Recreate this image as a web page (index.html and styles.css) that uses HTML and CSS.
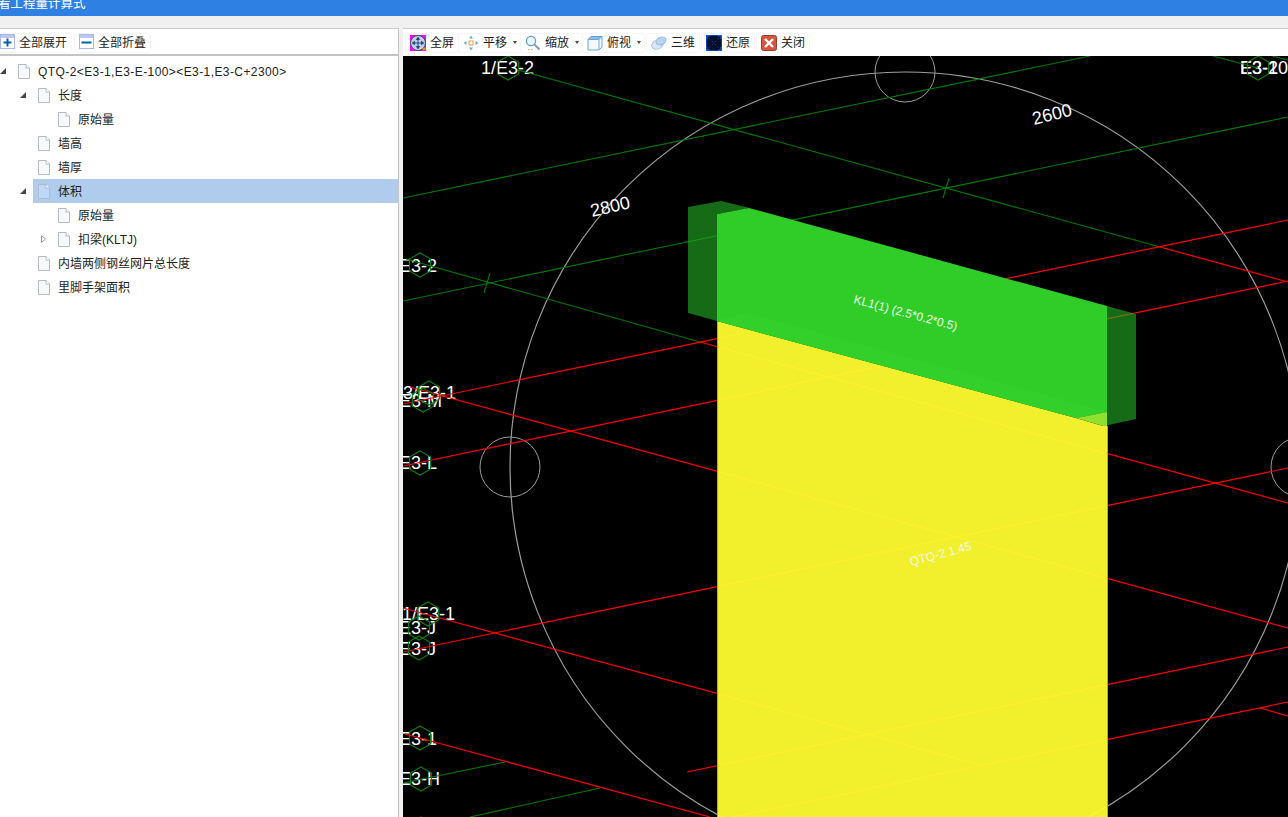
FILE: index.html
```html
<!DOCTYPE html>
<html lang="zh">
<head>
<meta charset="utf-8">
<title>查看工程量计算式</title>
<link rel="stylesheet" href="styles.css">
</head>
<body>
<svg class="defs">
  <symbol id="doc" viewBox="0 0 12 15">
    <path d="M.5.5H8L11.5 4V14.5H.5Z" stroke="#b4b9c6"/>
    <path d="M8 .5V4H11.5" fill="#fff" stroke="#b4b9c6"/>
  </symbol>
  <polygon id="hex" points="0,-12 10.6,-6 10.6,6 0,12 -10.6,6 -10.6,-6" fill="none" stroke="#0c800c" stroke-width="1.1"/>
</svg>

<header class="title"><span class="title-text">看工程量计算式</span></header>

<main class="main">
  <section class="tree-panel">
    <div class="toolbar toolbar-left">
      <div class="btn">
        <svg class="ico-s" viewBox="0 0 15 15"><rect x=".5" y=".5" width="14" height="14" fill="#fff" stroke="#a9b8ea"/><rect x="1" y="1" width="13" height="3" fill="#bcc8f2"/><path d="M7.5 4.5v8M3.5 8.5h8" stroke="#0b5ea8" stroke-width="2"/></svg>
        <span class="txt">全部展开</span>
      </div>
      <div class="btn">
        <svg class="ico-s" viewBox="0 0 15 15"><rect x=".5" y=".5" width="14" height="14" fill="#fff" stroke="#a9b8ea"/><rect x="1" y="1" width="13" height="3" fill="#bcc8f2"/><path d="M2.5 8.5h10" stroke="#0b5ea8" stroke-width="2"/></svg>
        <span class="txt">全部折叠</span>
      </div>
    </div>
    <ul class="tree">
      <li class="row"><svg class="arrow" viewBox="0 0 6 6"><path d="M6 0V6H0Z"/></svg><div class="node"><svg class="doc"><use href="#doc"/></svg><span class="txt spaced">QTQ-2&lt;E3-1,E3-E-100&gt;&lt;E3-1,E3-C+2300&gt;</span></div></li>
      <li class="row l1"><svg class="arrow" viewBox="0 0 6 6"><path d="M6 0V6H0Z"/></svg><div class="node"><svg class="doc"><use href="#doc"/></svg><span class="txt">长度</span></div></li>
      <li class="row l2"><span class="arrow"></span><div class="node"><svg class="doc"><use href="#doc"/></svg><span class="txt">原始量</span></div></li>
      <li class="row l1"><span class="arrow"></span><div class="node"><svg class="doc"><use href="#doc"/></svg><span class="txt">墙高</span></div></li>
      <li class="row l1"><span class="arrow"></span><div class="node"><svg class="doc"><use href="#doc"/></svg><span class="txt">墙厚</span></div></li>
      <li class="row l1"><svg class="arrow" viewBox="0 0 6 6"><path d="M6 0V6H0Z"/></svg><div class="node sel"><svg class="doc"><use href="#doc"/></svg><span class="txt">体积</span></div></li>
      <li class="row l2"><span class="arrow"></span><div class="node"><svg class="doc"><use href="#doc"/></svg><span class="txt">原始量</span></div></li>
      <li class="row l2"><svg class="arrow closed" viewBox="0 0 13 8"><path d="M1.5 .7 5.5 4 1.5 7.3Z"/></svg><div class="node"><svg class="doc"><use href="#doc"/></svg><span class="txt">扣梁(KLTJ)</span></div></li>
      <li class="row l1"><span class="arrow"></span><div class="node"><svg class="doc"><use href="#doc"/></svg><span class="txt">内墙两侧钢丝网片总长度</span></div></li>
      <li class="row l1"><span class="arrow"></span><div class="node"><svg class="doc"><use href="#doc"/></svg><span class="txt">里脚手架面积</span></div></li>
    </ul>
  </section>

  <section class="view-panel">
    <div class="toolbar toolbar-right">
      <div class="btn">
        <svg class="ico" viewBox="0 0 16 16"><rect width="16" height="16" fill="#f0f"/><circle cx="8" cy="8" r="7.5" fill="#c3cfe4" stroke="#3f4a66"/><path d="M8 2.5v11M2.5 8h11M8 2.5 6.4 4.5h3.2ZM8 13.5 6.4 11.5h3.2ZM2.5 8l2-1.6v3.2ZM13.5 8l-2-1.6v3.2Z" fill="#1d3f7a" stroke="#1d3f7a" stroke-width=".9"/><circle cx="14" cy="14" r="1.6" fill="#e09a20"/></svg>
        <span class="txt">全屏</span>
      </div>
      <div class="btn drop">
        <svg class="ico" viewBox="0 0 16 16"><rect x="6" y="6" width="4" height="4" fill="#fff" stroke="#ef9a4a"/><path d="M8 .5 10 3.5H6ZM8 15.5 6 12.5h4ZM.5 8 3.5 6v4ZM15.5 8 12.5 10V6Z" fill="#6fa7dc"/></svg>
        <span class="txt">平移</span><i class="caret"></i>
      </div>
      <div class="btn drop">
        <svg class="ico" viewBox="0 0 16 16"><circle cx="6" cy="6" r="4.6" fill="#eef6fd" stroke="#5f9fd8" stroke-width="1.3"/><path d="M9.5 9.5 14.5 14.5" stroke="#8a97a8" stroke-width="2"/><path d="M3 14.5h5" stroke="#efb27a" stroke-dasharray="2 1"/></svg>
        <span class="txt">缩放</span><i class="caret"></i>
      </div>
      <div class="btn drop">
        <svg class="ico" viewBox="0 0 16 16"><path d="M1 4.5 4 1.5H15L12 4.5Z" fill="#8fbde8" stroke="#5f9fd8"/><path d="M15 1.5V12L12 15M1 4.5H12V15H1Z" fill="#f4f9fe" stroke="#6ca6dc"/></svg>
        <span class="txt">俯视</span><i class="caret"></i>
      </div>
      <div class="btn">
        <svg class="ico" viewBox="0 0 16 16"><ellipse cx="6.5" cy="9.5" rx="6" ry="4.5" transform="rotate(-25 6.5 9.5)" fill="#dbe8f8" stroke="#a9c6e8"/><ellipse cx="10" cy="6" rx="5.2" ry="3.6" transform="rotate(-25 10 6)" fill="#bcd4f0" stroke="#8fb5e0"/></svg>
        <span class="txt">三维</span>
      </div>
      <div class="btn">
        <svg class="ico" viewBox="0 0 16 16"><rect x=".5" y=".5" width="15" height="15" fill="#03102c" stroke="#0c3fb0"/><path d="M0 0h4v1.5H1.5V4H0ZM16 0v4h-1.5V1.5H12V0ZM0 16v-4h1.5v2.5H4V16ZM16 16h-4v-1.5h2.5V12H16Z" fill="#0b56e8"/><path d="M3 3 13 13M13 3 3 13" stroke="#0d3580" stroke-dasharray="2 2"/></svg>
        <span class="txt">还原</span>
      </div>
      <div class="btn">
        <svg class="ico" viewBox="0 0 16 16"><rect x=".5" y=".5" width="15" height="15" rx="2" fill="#d9543f" stroke="#8c4034"/><path d="M4 4 12 12M12 4 4 12" stroke="#fff" stroke-width="2.4"/></svg>
        <span class="txt">关闭</span>
      </div>
    </div>

    <div class="canvas">
      <svg class="drawing" viewBox="403 56 885 761">
        <g class="arcs">
          <circle cx="905" cy="467" r="395" stroke-width="1.2"/>
          <circle cx="905" cy="72" r="30"/>
          <circle cx="510" cy="467" r="30"/>
          <circle cx="1301" cy="467" r="30"/>
        </g>
        <g class="label">
          <text x="481" y="74">1/E3-2</text>
          <text x="1240" y="74">E3-10</text>
          <text x="1240" y="74">E3-2</text>
          <text x="399" y="272">E3-2</text>
          <text x="403" y="399">3/E3-1</text>
          <text x="399" y="407">E3-M</text>
          <text x="399" y="469">E3-L</text>
          <text x="402" y="620">1/E3-1</text>
          <text x="399" y="634">E3-J</text>
          <text x="399" y="655">E3-J</text>
          <text x="399" y="745">E3-1</text>
          <text x="399" y="785">E3-H</text>
          <text transform="translate(592 217) rotate(-13)">2800</text>
          <text transform="translate(1034 125) rotate(-14)">2600</text>
        </g>
        <g class="green">
          <path d="M518 70 1160 247"/>
          <path d="M403 198 1090 56"/>
          <path d="M403 301 1288 117"/>
          <path d="M406 259 700 342"/>
          <path d="M484 293 490 273M943 198 949 178"/>
          <path d="M403 783 505 762M470 817 600 788"/>
          <path d="M1213 56 1258 68M1272 56 1288 60"/>
        </g>
        <g class="red">
          <path d="M1160 247 1288 282"/>
          <path d="M700 342 1288 503"/>
          <path d="M403 404 1288 220"/>
          <path d="M410 387 1288 628"/>
          <path d="M403 466 1288 281"/>
          <path d="M403 652 1288 468"/>
          <path d="M403 608 980 765"/>
          <path d="M405 734 710 817"/>
          <path d="M687 772 1288 647"/>
          <path d="M733 817 1288 702"/>
          <path d="M1260 708 1288 716"/>
        </g>
        <g>
          <use href="#hex" x="508" y="68"/>
          <use href="#hex" x="1258" y="68"/>
          <use href="#hex" x="420" y="265"/>
          <use href="#hex" x="429" y="393"/>
          <use href="#hex" x="423" y="400"/>
          <use href="#hex" x="420" y="463"/>
          <use href="#hex" x="428" y="614"/>
          <use href="#hex" x="419" y="628"/>
          <use href="#hex" x="419" y="648"/>
          <use href="#hex" x="420" y="738"/>
          <use href="#hex" x="421" y="779"/>
          <use href="#hex" x="421" y="829"/>
        </g>
        <polygon class="wall" points="717,321 1076,418 1103,426 1107,426 1107,817 717,817"/>
        <path class="wall-edge" d="M717.5 321V817M1107.5 426V817"/>
        <polygon class="beam-side" points="688,207 721,201 750,208 717,214 717,321 688,313"/>
        <polygon class="beam-side" points="1107,306 1136,314 1136,419 1104,426 1107,412"/>
        <polygon class="beam-front" points="717,214 749,208 1107,306 1107,412 1076,418 717,321"/>
        <polygon class="beam-band" points="717,321 747,313 1107,412 1076,418"/>
        <polygon class="beam-over" points="1076,418 1107,412 1107,426 1103,426"/>
        <text class="tag" transform="translate(853 303) rotate(15)">KL1(1) (2.5*0.2*0.5)</text>
        <text class="tag" transform="translate(911 566) rotate(-15)">QTQ-2 1.45</text>
      </svg>
    </div>
  </section>
</main>
</body>
</html>
```
FILE: styles.css
```css
* { box-sizing: border-box; }
html, body { margin: 0; height: 100%; }
body {
  background: #f0f0f0;
  color: #222;
  font: 12px/1.2 "Liberation Sans", "Noto Sans CJK SC", sans-serif;
  overflow: hidden;
  display: flex;
  flex-direction: column;
}
.defs { display: none; }

.title {
  height: 16px;
  flex: none;
  background: #2e80e2;
  color: #fff;
  overflow: hidden;
  margin-bottom: 12px;
}
.title-text {
  display: block;
  margin-left: -2px;
  font-size: 12.5px;
  line-height: 8px;
}

.main { flex: 1; display: flex; gap: 4px; min-height: 0; }

.tree-panel {
  width: 399px;
  flex: none;
  background: #fff;
  border-right: 1px solid #c6c6c6;
  overflow: hidden;
}
.view-panel { flex: 1; min-width: 0; display: flex; flex-direction: column; }

.toolbar {
  height: 28px;
  flex: none;
  display: flex;
  align-items: center;
  background: #fff;
  border-top: 1px solid #c8c8c8;
}
.toolbar-left {
  border-bottom: 2px solid #c4c4c4;
  margin-left: -5px;
  padding-top: 2px;
  gap: 1px;
}
.toolbar-right { padding-left: 2px; }

.btn {
  height: 20px;
  display: flex;
  align-items: center;
  gap: 4px;
  padding: 0 4px;
  margin-right: 1px;
  border: 1px solid #f6f6f6;
  border-radius: 3px;
}
.btn.drop { margin-left: -2px; padding-right: 3px; }
.txt { padding-top: 2px; }
.ico { width: 16px; height: 16px; flex: none; }
.ico-s { width: 15px; height: 15px; flex: none; margin-top: -2px; }
.caret {
  width: 0;
  height: 0;
  margin-left: 2px;
  border: 2.5px solid transparent;
  border-top: 3px solid #444;
  border-bottom: 0;
}

.tree { list-style: none; margin: 3px 0 0; padding: 0; }
.row { height: 24px; display: flex; align-items: center; }
.l1 { padding-left: 20px; }
.l2 { padding-left: 40px; }
.arrow { width: 6px; height: 6px; margin-right: 7px; flex: none; fill: #444; }
.arrow.closed { width: 13px; height: 8px; margin-right: 0; fill: #fff; stroke: #999; }
.node {
  flex: 1;
  height: 24px;
  display: flex;
  align-items: center;
  gap: 8px;
  padding-left: 5px;
}
.doc { width: 12px; height: 15px; flex: none; fill: #f8f9fc; }
.sel { background: #b0ccec; }
.sel .doc { fill: #bcd8fa; }
.spaced { letter-spacing: .41px; }

.canvas { flex: 1; min-height: 0; background: #000; overflow: hidden; }
.drawing { display: block; width: 100%; height: 100%; }
.arcs circle { fill: none; stroke: #9c9c9c; }
.label text { fill: #fff; font: 18px "Liberation Sans", sans-serif; }
.green path { fill: none; stroke: #007a00; stroke-width: 1.1; }
.red path { fill: none; stroke: #f00; stroke-width: 1.2; }
.wall { fill: #fffd2e; fill-opacity: .95; }
.wall-edge { fill: none; stroke: #a8a850; }
.beam-side { fill: #25b225; fill-opacity: .6; }
.beam-front { fill: #30cd28; }
.beam-band { fill: #33d02b; }
.beam-over { fill: #8fe02f; }
.tag { fill: #eef8ea; font: 12px "Liberation Sans", sans-serif; }
```
